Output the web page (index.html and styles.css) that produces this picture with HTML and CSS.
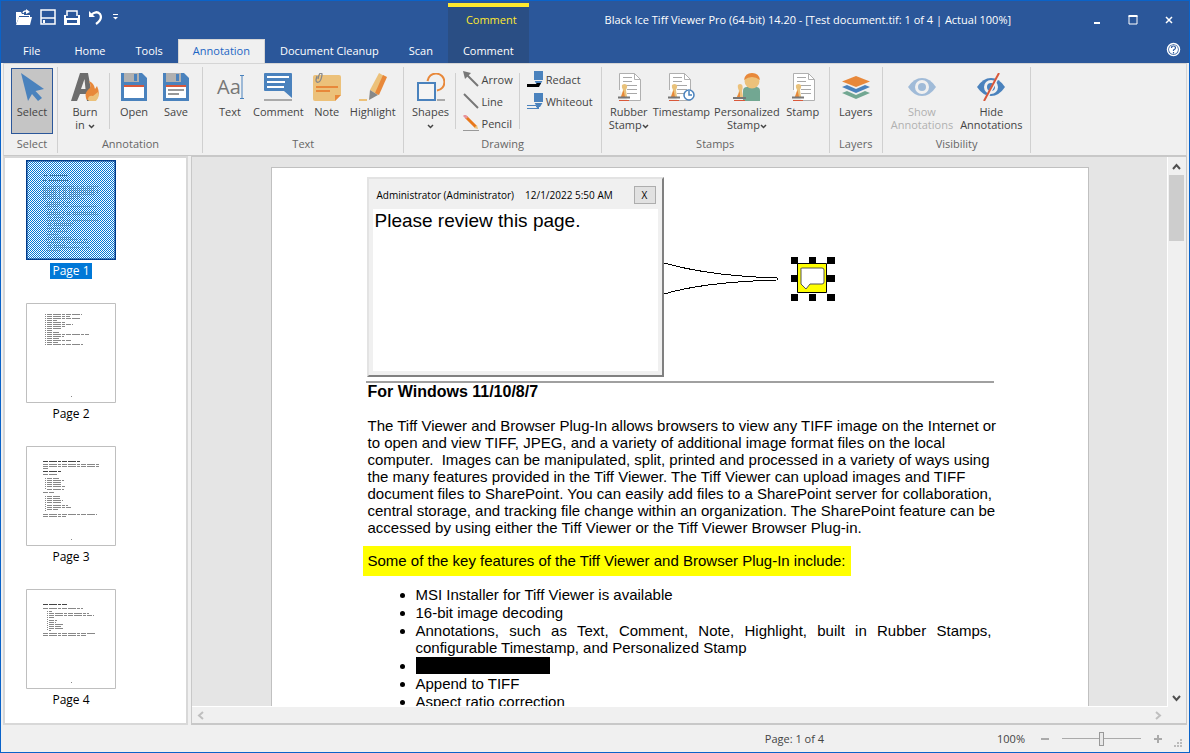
FILE: index.html
```html
<!DOCTYPE html>
<html lang="en">
<head>
  <meta charset="UTF-8">
  <meta name="viewport" content="width=device-width, initial-scale=1.0">
  <title>Black Ice Tiff Viewer Pro</title>
  <link rel="stylesheet" href="styles.css">
</head>
<body>
  <!-- Shared icon parts -->
  <svg class="defs" aria-hidden="true">
    <symbol id="stamp-doc" viewBox="0 0 28 28">
      <path d="M4.500 17V.5H19.500L25.500 6.500V27.500H13" fill="#fff" stroke="#b0b0b0"/>
      <path d="M19.500 .5V6.500H25.500" fill="none" stroke="#b0b0b0"/>
      <path d="M8 4.500H17M8 8.500H17M8 12.500H22M12 16.500H22M12 20.500H22" stroke="#a8a8a8"/>
      <path d="M6 24L8 17Q5 11 9.500 11Q14 11 11 17L12 24Z" fill="#e9c27b"/>
      <path d="M6 24L8.500 17L10 24Z" fill="#e8883a"/>
      <path d="M3 24.500H15" stroke="#777" stroke-width="2"/>
      <path d="M4 27.500H14" stroke="#d9583a"/>
    </symbol>
    <symbol id="chevron" viewBox="0 0 7 5">
      <path d="M1 1L3.500 3.500L6 1" fill="none" stroke="#444" stroke-width="1.500"/>
    </symbol>
    <pattern id="checker" width="2" height="2" patternUnits="userSpaceOnUse">
      <path d="M0 0H1V1H0ZM1 1H2V2H1Z" fill="#0078d7"/>
    </pattern>
  </svg>

  <header class="titlebar">
    <div class="titlebar-left">
      <div class="quick-access">
        <button aria-label="Open file">
          <svg width="16" height="16" viewBox="0 0 16 16"><path d="M0 15V3H5L6 5H8V6H14V8H3L1 13" fill="#fff"/><path d="M0 16L3 8H16L14 16Z" fill="#fff"/><path d="M3 7.500H13" stroke="#2b579a"/><path d="M7 4Q8 1 12 2.500" fill="none" stroke="#fff" stroke-width="1.500"/><path d="M10 0L14 3L10 5Z" fill="#fff"/></svg>
        </button>
        <button aria-label="Save">
          <svg width="16" height="16" viewBox="0 0 16 16"><path d="M1 1H15V15H1ZM1 9H15" fill="none" stroke="#fff" stroke-width="1.500"/><path d="M4 11V14" stroke="#fff" stroke-width="2"/></svg>
        </button>
        <button aria-label="Print">
          <svg width="16" height="16" viewBox="0 0 16 16"><path d="M3 7V2H13V7" fill="none" stroke="#fff" stroke-width="1.500"/><path d="M0 6H2V9H14V6H16V16H0Z" fill="#fff"/><path d="M3 11H13V14H3Z" fill="#2b579a"/></svg>
        </button>
        <button aria-label="Undo">
          <svg width="16" height="16" viewBox="0 0 16 16"><path d="M3 6Q8 1 12 5Q15 10 8 15" fill="none" stroke="#fff" stroke-width="2.200"/><path d="M1 2V8H7Z" fill="#fff"/></svg>
        </button>
        <button class="narrow" aria-label="Customize toolbar">
          <svg width="5" height="6" viewBox="0 0 5 6"><path d="M0 .5H5" stroke="#fff"/><path d="M0 3H5L2.500 5.500Z" fill="#fff"/></svg>
        </button>
      </div>
      <nav class="tabs">
        <button class="tab file">File</button>
        <button class="tab">Home</button>
        <button class="tab">Tools</button>
        <button class="tab active">Annotation</button>
        <button class="tab">Document Cleanup</button>
        <button class="tab">Scan</button>
      </nav>
    </div>
    <div class="context-tab">
      <div class="context-title">Comment</div>
      <button class="tab">Comment</button>
    </div>
    <div class="titlebar-right">
      <div class="caption-row">
        <h1 class="caption">Black Ice Tiff Viewer Pro (64-bit) 14.20 - [Test document.tif: 1 of 4 | Actual 100%]</h1>
        <div class="window-buttons">
          <button aria-label="Minimize"><svg width="10" height="10" viewBox="0 0 10 10"><path d="M2 8H8" stroke="#fff" stroke-width="2"/></svg></button>
          <button aria-label="Maximize"><svg width="10" height="10" viewBox="0 0 10 10"><path d="M1 1H9V9H1Z" fill="none" stroke="#fff"/><path d="M.5 1H9.500" stroke="#fff" stroke-width="2"/></svg></button>
          <button aria-label="Close"><svg width="10" height="10" viewBox="0 0 10 10"><path d="M2 2L8 8M8 2L2 8" stroke="#fff" stroke-width="1.500"/></svg></button>
        </div>
      </div>
      <div class="help-row">
        <button aria-label="Help"><svg width="15" height="15" viewBox="0 0 15 15"><circle cx="7.500" cy="7.500" r="6" fill="#2b579a" stroke="#fff" stroke-width="1.500"/><circle cx="7.500" cy="7.500" r="4.500" fill="#fff"/><path d="M5.500 6Q5.500 4 7.500 4Q9.500 4 9.500 6Q9.500 7 7.500 8V9" fill="none" stroke="#2b579a" stroke-width="1.200"/><path d="M7.500 10V11.500" stroke="#2b579a" stroke-width="1.200"/></svg></button>
      </div>
    </div>
  </header>

  <section class="ribbon">
    <div class="group">
      <div class="items">
        <button class="big selected">
          <svg width="28" height="28" viewBox="0 0 28 28"><path d="M3 0L26 16L17.500 18L24 25L20 28L14 21L10 28Z" fill="#4a82bd"/></svg>
          <span>Select</span>
        </button>
      </div>
      <div class="group-name">Select</div>
    </div>

    <div class="group roomy">
      <div class="items">
        <button class="big">
          <svg width="28" height="28" viewBox="0 0 28 28"><path d="M0 28L9 0H17L22 28H16L15 21H9L6 28ZM10 16H14.500L13.500 6Z" fill="#6d6d6d"/><path d="M16 27Q12 20 19 15Q20 12 18 8Q23 10 24 16L26 13Q30 22 25 27Z" fill="#e8883a"/><path d="M17 27Q17 22 22 23L27 19Q29 24 25 28H18Z" fill="#ecc17a"/></svg>
          <span>Burn<br>in <svg width="7" height="5"><use href="#chevron"/></svg></span>
        </button>
        <div class="divider"></div>
        <button class="big">
          <svg width="28" height="28" viewBox="0 0 28 28"><path d="M1 0H22L27 5V28H1Z" fill="#4a82bd"/><path d="M4 0H19V9H4Z" fill="#b0b0b0"/><path d="M14 1H17V8H14Z" fill="#4a82bd"/><path d="M4 13H24V25H4Z" fill="#fff"/><path d="M4 13H24" stroke="#d9583a" stroke-width="2"/></svg>
          <span>Open</span>
        </button>
        <button class="big">
          <svg width="28" height="28" viewBox="0 0 28 28"><path d="M1 0H22L27 5V28H1Z" fill="#4a82bd"/><path d="M4 0H19V9H4Z" fill="#b0b0b0"/><path d="M14 1H17V8H14Z" fill="#4a82bd"/><path d="M4 13H24V25H4Z" fill="#fff"/><path d="M4 13H24" stroke="#d9583a" stroke-width="2"/><path d="M6 17H22M6 21H17" stroke="#777" stroke-width="1.500"/></svg>
          <span>Save</span>
        </button>
      </div>
      <div class="group-name">Annotation</div>
    </div>

    <div class="group roomy">
      <div class="items">
        <button class="big">
          <svg width="28" height="28" viewBox="0 0 28 28"><text x="1" y="21" font-family="Open Sans" font-size="20" fill="#777">Aa</text><path d="M24 2.500H28M24 25.500H28M26 2.500V25.500" stroke="#4a82bd"/></svg>
          <span>Text</span>
        </button>
        <button class="big">
          <svg width="28" height="28" viewBox="0 0 28 28"><path d="M1 0H27Q28 0 28 1V25L20 18H1Q0 18 0 17V1Q0 0 1 0Z" fill="#4a82bd"/><path d="M3 4H25M3 9H21M3 14H20" stroke="#fff" stroke-width="2"/><path d="M0 27H28" stroke="#aaa" stroke-width="2"/></svg>
          <span>Comment</span>
        </button>
        <button class="big">
          <svg width="28" height="28" viewBox="0 0 28 28"><path d="M2 2H26Q28 2 28 4V22L22 28H2Q0 28 0 26V4Q0 2 2 2Z" fill="#ecc17a"/><path d="M22 28V22H28Z" fill="#e8883a"/><path d="M3 14H25M3 18H17" stroke="#e8883a" stroke-width="2"/><path d="M4 3L3 7Q3 10 6 9Q8 8 9 2Q9-1 7 .5Q6 1 5 6" fill="none" stroke="#888" stroke-width="1.300"/></svg>
          <span>Note</span>
        </button>
        <button class="big">
          <svg width="28" height="28" viewBox="0 0 28 28"><path d="M11 17L20 0L27 4L19 22Z" fill="#ecc17a"/><path d="M16 20L24 2L28 4L20 22Z" fill="#e8883a"/><path d="M11 17L19 22L10 27Z" fill="#888"/><path d="M0 27H8" stroke="#ecc17a" stroke-width="2"/></svg>
          <span>Highlight</span>
        </button>
      </div>
      <div class="group-name">Text</div>
    </div>

    <div class="group roomy">
      <div class="items">
        <button class="big">
          <svg width="28" height="28" viewBox="0 0 28 28"><path d="M10.500 8A8.500 8.500 0 1 1 20 17.500" fill="none" stroke="#e8883a" stroke-width="2"/><path d="M1 10H18V27H1Z" fill="#f4f4f4" stroke="#4a82bd" stroke-width="2"/><path d="M20 27H28" stroke="#aaa" stroke-width="2"/></svg>
          <span>Shapes<br><svg width="7" height="5"><use href="#chevron"/></svg></span>
        </button>
        <div class="divider"></div>
        <div class="stack">
          <button class="small">
            <svg width="16" height="16" viewBox="0 0 16 16"><path d="M3 3L15 15" stroke="#777" stroke-width="2"/><path d="M0 0L8 2L2 8Z" fill="#777"/></svg>
            <span>Arrow</span>
          </button>
          <button class="small">
            <svg width="16" height="16" viewBox="0 0 16 16"><path d="M1 1L15 15" stroke="#777" stroke-width="2"/></svg>
            <span>Line</span>
          </button>
          <button class="small">
            <svg width="16" height="16" viewBox="0 0 16 16"><path d="M3 2L13 12" stroke="#e8781a" stroke-width="3"/><path d="M1 0L4 3" stroke="#e8939b" stroke-width="3"/><path d="M15 14L11 13L14 10Z" fill="#ecc17a"/><path d="M0 15.500H16" stroke="#999"/></svg>
            <span>Pencil</span>
          </button>
        </div>
        <div class="divider"></div>
        <div class="stack">
          <button class="small">
            <svg width="16" height="16" viewBox="0 0 16 16"><path d="M7 0H16V9L13 14H10L7 9Z" fill="#4a82bd"/><path d="M7 9.500H16" stroke="#f0f0f0"/><path d="M0 13H9L10 12H14L12 16H0Z" fill="#000"/></svg>
            <span>Redact</span>
          </button>
          <button class="small">
            <svg width="16" height="16" viewBox="0 0 16 16"><path d="M7 0H16V9L13 14H10L7 9Z" fill="#4a82bd"/><path d="M7 9.500H16" stroke="#f0f0f0"/><path d="M0 12.500H9L10 14.500H12M0 15.500H12" fill="none" stroke="#4a82bd"/></svg>
            <span>Whiteout</span>
          </button>
        </div>
      </div>
      <div class="group-name">Drawing</div>
    </div>

    <div class="group">
      <div class="items">
        <button class="big">
          <svg width="28" height="28"><use href="#stamp-doc"/></svg>
          <span>Rubber<br>Stamp<svg width="7" height="5"><use href="#chevron"/></svg></span>
        </button>
        <button class="big">
          <svg width="28" height="28" viewBox="0 0 28 28"><use href="#stamp-doc" x="-2" width="28" height="28"/><circle cx="22" cy="22" r="5" fill="#fff" stroke="#4a82bd" stroke-width="1.500"/><path d="M22 18V22H25" fill="none" stroke="#4a82bd" stroke-width="1.500"/></svg>
          <span>Timestamp</span>
        </button>
        <button class="big">
          <svg width="28" height="28" viewBox="0 0 28 28"><path d="M10 28V18Q10 14 14 14H23Q27 14 27 18V28Z" fill="#72a792"/><circle cx="19" cy="8" r="7.500" fill="#ecc17a"/><path d="M11 7Q12 0 19 0Q26 0 27 7Q23 4 19 4Q15 4 11 7Z" fill="#e8883a"/><path d="M4 24L6 18Q3 11 7 11Q11 11 9 18L10 24Z" fill="#ecc17a"/><path d="M4 24L7 18V24Z" fill="#e8883a"/><path d="M0 25H13" stroke="#777" stroke-width="2"/><path d="M1 27.500H12" stroke="#d9583a"/></svg>
          <span>Personalized<br>Stamp<svg width="7" height="5"><use href="#chevron"/></svg></span>
        </button>
        <button class="big">
          <svg width="28" height="28"><use href="#stamp-doc"/></svg>
          <span>Stamp</span>
        </button>
      </div>
      <div class="group-name">Stamps</div>
    </div>

    <div class="group">
      <div class="items">
        <button class="big">
          <svg width="28" height="28" viewBox="0 0 28 28"><path d="M0 20L5 18L14 22L23 18L28 20L14 26Z" fill="#72a792"/><path d="M0 14L5 12L14 16L23 12L28 14L14 20Z" fill="#4a82bd"/><path d="M14 3L28 8.500L14 14L0 8.500Z" fill="#f0f0f0" stroke="#f0f0f0" stroke-width="2"/><path d="M14 3L28 8.500L14 14L0 8.500Z" fill="#e8883a"/></svg>
          <span>Layers</span>
        </button>
      </div>
      <div class="group-name">Layers</div>
    </div>

    <div class="group roomy">
      <div class="items spaced">
        <button class="big" disabled>
          <svg width="28" height="28" viewBox="0 0 28 28"><path d="M0 14Q6 5 14 5Q22 5 28 14Q22 23 14 23Q6 23 0 14Z" fill="#a0bbd8"/><circle cx="14" cy="14" r="5.500" fill="#a0bbd8" stroke="#f0f0f0" stroke-width="3"/></svg>
          <span>Show<br>Annotations</span>
        </button>
        <button class="big">
          <svg width="28" height="28" viewBox="0 0 28 28"><path d="M0 14Q6 5 14 5Q22 5 28 14Q22 23 14 23Q6 23 0 14Z" fill="#4a82bd"/><circle cx="14" cy="14" r="5.500" fill="#4a82bd" stroke="#f0f0f0" stroke-width="3"/><path d="M23 0L8 28" stroke="#f0f0f0" stroke-width="3"/><path d="M22 0L7 28" stroke="#d9583a" stroke-width="2"/></svg>
          <span>Hide<br>Annotations</span>
        </button>
      </div>
      <div class="group-name">Visibility</div>
    </div>
  </section>

  <main class="workspace">
    <aside class="thumbs">
      <figure class="thumb current">
        <svg width="90" height="100" viewBox="0 0 90 100">
          <path d="M0 0H90V100H0Z" fill="#fff"/>
          <g class="micro">
            <path class="strong" d="M17 15.500H41M16 20.500H42"/>
            <path d="M16 26.500H73M17 28.500H71M17 30.500H73M17 32.500H72M17 34.500H70M17 36.500H54M16 38.500H60M21 42.500H45M21 44.500H38M19 46.500H73M21 49.500H32M21 52.500H70M21 54.500H73M21 57.500H37M21 60.500H72M21 63.500H47M21 65.500H46M21 68.500H42M21 71.500H41M21 74.500H33M21 77.500H46M19 79.500H63M21 82.500H63M21 85.500H39M21 87.500H66M21 90.500H36"/>
          </g>
          <path d="M0 0H90V100H0Z" fill="url(#checker)" shape-rendering="crispEdges"/>
          <path d="M.5 .5H89.500V99.500H.5Z" fill="none" stroke="#003c8c" stroke-width="2"/>
        </svg>
        <figcaption>Page 1</figcaption>
      </figure>
      <figure class="thumb">
        <svg width="90" height="100" viewBox="0 0 90 100">
          <path d="M.5 .5H89.500V99.500H.5Z" fill="#fff" stroke="#bfbfbf"/>
          <g class="micro">
            <path d="M21 11.500H56M21 13.500H44M21 15.500H54M21 17.500H31M21 19.500H40M21 21.500H47M21 23.500H39M21 25.500H36M21 27.500H27M21 29.500H33M21 31.500H63M21 33.500H38M21 35.500H33M21 37.500H46M21 39.500H32M21 41.500H57"/>
            <path class="dots" d="M19.500 11V42"/>
            <path d="M45 93.500H46"/>
          </g>
        </svg>
        <figcaption>Page 2</figcaption>
      </figure>
      <figure class="thumb">
        <svg width="90" height="100" viewBox="0 0 90 100">
          <path d="M.5 .5H89.500V99.500H.5Z" fill="#fff" stroke="#bfbfbf"/>
          <g class="micro">
            <path class="strong" d="M17 15.500H55M17 25.500H36"/>
            <path d="M17 18.500H73M17 20.500H74M17 22.500H22M17 28.500H31M21 32.500H33M21 34.500H38M21 36.500H36M21 38.500H36M21 40.500H39M21 43.500H38M17 46.500H28M21 50.500H34M21 52.500H34M21 54.500H37M21 56.500H35M21 59.500H42M21 61.500H46M21 63.500H32M17 68.500H71M17 70.500H40"/>
            <path class="dots" d="M19.500 32V44M19.500 50V65"/>
            <path d="M45 93.500H46"/>
          </g>
        </svg>
        <figcaption>Page 3</figcaption>
      </figure>
      <figure class="thumb">
        <svg width="90" height="100" viewBox="0 0 90 100">
          <path d="M.5 .5H89.500V99.500H.5Z" fill="#fff" stroke="#bfbfbf"/>
          <g class="micro">
            <path class="strong" d="M17 15.500H41"/>
            <path d="M17 19.500H57M23 22.500H26M23 24.500H63M23 26.500H68M23 28.500H28M23 31.500H31M23 33.500H30M23 35.500H37M23 37.500H35M23 39.500H37M23 41.500H25M17 44.500H70M17 46.500H60"/>
            <path class="dots" d="M21.500 22V42"/>
            <path d="M45 93.500H46"/>
          </g>
        </svg>
        <figcaption>Page 4</figcaption>
      </figure>
    </aside>

    <section class="viewer">
      <div class="viewer-main">
        <div class="canvas">
          <article class="page">
            <hr>
            <h2>For Windows 11/10/8/7</h2>
            <p class="intro">The Tiff Viewer and Browser Plug-In allows browsers to view any TIFF image on the Internet or<br>
              to open and view TIFF, JPEG, and a variety of additional image format files on the local<br>
              computer.&nbsp; Images can be manipulated, split, printed and processed in a variety of ways using<br>
              the many features provided in the Tiff Viewer. The Tiff Viewer can upload images and TIFF<br>
              document files to SharePoint. You can easily add files to a SharePoint server for collaboration,<br>
              central storage, and tracking file change within an organization. The SharePoint feature can be<br>
              accessed by using either the Tiff Viewer or the Tiff Viewer Browser Plug-in.</p>
            <p class="marked"><mark>Some of the key features of the Tiff Viewer and Browser Plug-In include:</mark></p>
            <ul>
              <li>MSI Installer for Tiff Viewer is available</li>
              <li>16-bit image decoding</li>
              <li class="justified">Annotations, such as Text, Comment, Note, Highlight, built in Rubber Stamps, configurable Timestamp, and Personalized Stamp</li>
              <li><span class="redacted"></span></li>
              <li>Append to TIFF</li>
              <li>Aspect ratio correction</li>
            </ul>

            <!-- Comment annotation placed over the page -->
            <div class="note">
              <div class="note-head">
                <label for="note-text">Administrator (Administrator)</label>
                <time>12/1/2022 5:50 AM</time>
                <button aria-label="Close comment">X</button>
              </div>
              <textarea id="note-text">Please review this page.</textarea>
            </div>
            <svg class="callout" width="114" height="34" viewBox="0 0 114 34">
              <path d="M0 1Q46 14 113 16V18Q40 20 0 32" fill="none" stroke="#000" shape-rendering="crispEdges"/>
            </svg>
            <svg class="marker" width="44" height="44" viewBox="0 0 44 44">
              <path d="M6.500 6.500H35.500V35.500H6.500Z" fill="#ff0" stroke="#000"/>
              <path d="M11 11H31Q33 11 33 13V25Q33 27 31 27H19L15 32L10 27V13Q9 11 11 11Z" fill="#fff" stroke="#555"/>
              <path d="M0 0H7V7H0ZM18 0H25V7H18ZM36 0H44V7H36ZM0 18H6V25H0ZM36 18H44V25H36ZM0 37H7V44H0ZM18 37H25V44H18ZM36 37H44V44H36Z"/>
            </svg>
          </article>
        </div>
        <div class="vscroll">
          <button aria-label="Scroll up"><svg width="9" height="7" viewBox="0 0 9 7"><path d="M1 6L4.500 2L8 6" fill="none" stroke="#505050" stroke-width="2"/></svg></button>
          <div class="vscroll-thumb"></div>
          <button class="end" aria-label="Scroll down"><svg width="9" height="7" viewBox="0 0 9 7"><path d="M1 1L4.500 5L8 1" fill="none" stroke="#505050" stroke-width="2"/></svg></button>
        </div>
      </div>
      <div class="hscroll">
        <button aria-label="Scroll left"><svg width="7" height="9" viewBox="0 0 7 9"><path d="M6 1L2 4.500L6 8" fill="none" stroke="#bfbfbf" stroke-width="2"/></svg></button>
        <button aria-label="Scroll right"><svg width="7" height="9" viewBox="0 0 7 9"><path d="M1 1L5 4.500L1 8" fill="none" stroke="#bfbfbf" stroke-width="2"/></svg></button>
      </div>
    </section>
  </main>

  <footer class="statusbar">
    <span class="page-info">Page: 1 of 4</span>
    <label for="zoom">100%</label>
    <button aria-label="Zoom out"><svg width="8" height="8" viewBox="0 0 8 8"><path d="M0 4H8" stroke="#aaa" stroke-width="2"/></svg></button>
    <input type="range" id="zoom" min="0" max="100" value="50">
    <button aria-label="Zoom in"><svg width="8" height="8" viewBox="0 0 8 8"><path d="M0 4H8M4 0V8" stroke="#aaa" stroke-width="2"/></svg></button>
    <svg class="grip" width="8" height="8" viewBox="0 0 8 8"><path d="M6 0H8V2H6ZM3 3H5V5H3ZM6 3H8V5H6ZM0 6H2V8H0ZM3 6H5V8H3ZM6 6H8V8H6Z" fill="#bbb"/></svg>
  </footer>
</body>
</html>
```
FILE: styles.css
```css
* {
  box-sizing: border-box;
}

body {
  margin: 0;
  height: 100vh;
  display: flex;
  flex-direction: column;
  overflow: hidden;
  border: 1px solid #0a63c9;
  background: #f0f0f0;
  color: #444;
  font-family: "Open Sans", sans-serif;
  font-size: 11px;
}

button {
  margin: 0;
  padding: 0;
  border: none;
  background: none;
  color: inherit;
  font: inherit;
}

svg {
  display: block;
}

.defs {
  position: absolute;
  width: 0;
  height: 0;
}

/* Title bar and tabs */
.titlebar {
  display: flex;
  height: 62px;
  flex: none;
  background: #2b579a;
  color: #fff;
}

.titlebar-left {
  display: flex;
  flex-direction: column;
  justify-content: space-between;
}

.quick-access {
  display: flex;
  gap: 8px;
  padding: 8px 0 0 15px;
}

.quick-access .narrow {
  padding-left: 1px;
}

.tabs {
  display: flex;
  padding-left: 7px;
}

.tab {
  height: 24px;
  padding: 0 14px 2px;
  border: 1px solid transparent;
  border-bottom: none;
  white-space: nowrap;
}

.tab.file {
  margin-right: 4px;
}

.tab.active {
  background: #f0f0f0;
  border-color: #d5d5d5;
  color: #1c66c4;
}

.context-tab {
  display: flex;
  flex-direction: column;
  justify-content: space-between;
  margin-top: 2px;
  border-top: 4px solid #ffe92e;
  background: #2a4e84;
}

.context-title {
  padding: 5px 0 0 18px;
  color: #ffe92e;
}

.titlebar-right {
  flex: 1;
  display: flex;
  flex-direction: column;
  justify-content: space-between;
}

.caption-row {
  display: flex;
  align-items: center;
  padding: 10px 2px 0 0;
}

.caption {
  flex: 1;
  margin: 0;
  padding-left: 8px;
  font-size: 11px;
  font-weight: normal;
  line-height: 18px;
  text-align: center;
  white-space: nowrap;
}

.window-buttons {
  display: flex;
}

.window-buttons button {
  width: 36px;
  height: 18px;
  display: flex;
  align-items: center;
  justify-content: center;
}

.help-row {
  display: flex;
  justify-content: flex-end;
  padding: 0 8px 6px;
}

/* Ribbon */
.ribbon {
  display: flex;
  flex: none;
  margin: 0 2px;
  padding: 3px 0 2px;
  border: 1px solid #d5d5d5;
  border-bottom: 1px solid #c8c8c8;
}

.group {
  display: flex;
  flex-direction: column;
  padding: 0 5px;
  border-right: 1px solid #d0d0d0;
}

.group.roomy {
  padding-left: 6px;
}

.group:first-child {
  padding: 0 4px 0 7px;
}

.items {
  display: flex;
  height: 68px;
  padding-top: 1px;
}

.items.spaced {
  gap: 3px;
}

.big {
  display: flex;
  flex-direction: column;
  align-items: center;
  gap: 4px;
  min-width: 42px;
  height: 66px;
  padding: 4px 1px 0;
  border: 1px solid transparent;
  line-height: 13px;
  text-align: center;
  white-space: nowrap;
}

.big span svg {
  display: inline-block;
  vertical-align: middle;
}

.big.selected {
  background: #c5c5c5;
  border-color: #2b579a;
}

.big:disabled {
  color: #b0b0b0;
}

.divider {
  width: 1px;
  margin: 5px 3px 6px;
  background: #d0d0d0;
}

.stack {
  padding: 0 3px 0 4px;
}

.small {
  display: flex;
  align-items: center;
  gap: 3px;
  height: 22px;
}

.group-name {
  color: #666;
  line-height: 18px;
  text-align: center;
}

/* Page list and document view */
.workspace {
  flex: 1;
  display: flex;
  gap: 3px;
  min-height: 0;
  margin: 0 2px;
}

.thumbs {
  width: 185px;
  flex: none;
  overflow: hidden;
  padding: 2px 0 0 21px;
  border: 2px solid #d8d8d8;
  background: #fff;
  color: #000;
}

.thumb {
  width: 90px;
  height: 143px;
  margin: 0;
  display: flex;
  flex-direction: column;
  align-items: center;
  gap: 3px;
}

.thumb figcaption {
  padding: 0 2px;
  font-size: 12px;
  line-height: 16px;
}

.thumb.current figcaption {
  background: #0078d7;
  color: #fff;
}

.micro path {
  fill: none;
  stroke: #888;
  stroke-dasharray: 5 1 8 1 3 1;
}

.micro .strong {
  stroke: #444;
}

.current .micro path {
  stroke: #bbb;
}

.current .micro .strong {
  stroke: #777;
}

.micro .dots {
  stroke-dasharray: 1 1;
}

.viewer {
  flex: 1;
  min-width: 0;
  display: flex;
  flex-direction: column;
  border: 1px solid #c8c8c8;
  border-bottom-width: 2px;
  background: #f0f0f0;
}

.viewer-main {
  flex: 1;
  min-height: 0;
  display: flex;
}

.canvas {
  flex: 1;
  min-width: 0;
  overflow: hidden;
  padding-top: 10px;
  border-bottom: 1px solid #fff;
  background: #e5e5e5;
}

.page {
  position: relative;
  max-width: 818px;
  margin: 0 auto;
  padding: 213px 96px 20px;
  border: 1px solid #c0c0c0;
  background: #fff;
  color: #000;
  font-family: "Liberation Sans", Arial, sans-serif;
  font-size: 15px;
  line-height: 17px;
}

.page hr {
  height: 2px;
  margin: 0 -2px;
  border: none;
  background: #a0a0a0;
}

.page h2 {
  margin: 0 0 17px;
  font-size: 16px;
}

.page p {
  margin: 0 0 10px;
}

.page .intro {
  white-space: nowrap;
}

.page .marked {
  margin: 0 0 10px -5px;
}

.page mark {
  display: inline-block;
  padding: 6px 5px 7px;
  background: #ff0;
}

.page ul {
  margin: 0;
  padding-left: 48px;
}

.page li {
  margin-bottom: 1px;
}

.page .justified {
  text-align: justify;
}

.redacted {
  display: block;
  width: 134px;
  height: 17px;
  background: #000;
}

/* Annotation overlay */
.note {
  position: absolute;
  top: 9px;
  left: 95px;
  width: 297px;
  height: 200px;
  display: flex;
  flex-direction: column;
  padding: 4px;
  border: 2px solid #e3e3e3;
  border-right-color: #808080;
  border-bottom-color: #808080;
  background: #f0f0f0;
}

.note-head {
  display: flex;
  align-items: center;
  gap: 11px;
  height: 26px;
  padding: 0 2px 2px 4px;
  font-family: "Open Sans", sans-serif;
  font-size: 10px;
  white-space: nowrap;
}

.note-head button {
  flex: none;
  width: 22px;
  height: 18px;
  margin-left: auto;
  border: 1px solid #adadad;
  background: #e1e1e1;
  line-height: 16px;
}

.note textarea {
  flex: 1;
  padding: 0 2px;
  border: none;
  outline: none;
  resize: none;
  background: #fff;
  font-family: "Liberation Sans", Arial, sans-serif;
  font-size: 19px;
  line-height: 24px;
}

.callout {
  position: absolute;
  top: 94px;
  left: 392px;
}

.marker {
  position: absolute;
  top: 89px;
  left: 519px;
}

/* Scrollbars */
.vscroll {
  width: 19px;
  display: flex;
  flex-direction: column;
  padding: 1px 2px 0 1px;
  border-left: 1px solid #fff;
}

.vscroll button {
  height: 17px;
  display: flex;
  align-items: center;
  justify-content: center;
}

.vscroll .end {
  margin-top: auto;
}

.vscroll-thumb {
  height: 66px;
  background: #cdcdcd;
}

.hscroll {
  display: flex;
  justify-content: space-between;
  height: 16px;
  padding: 0 24px 0 5px;
}

/* Status bar */
.statusbar {
  flex: none;
  display: flex;
  align-items: center;
  height: 27px;
  padding: 0 7px 0 14px;
}

.page-info {
  margin-left: auto;
}

.statusbar label {
  margin: 0 16px 0 173px;
}

.statusbar input {
  appearance: none;
  width: 79px;
  height: 14px;
  margin: 0 13px;
  background: linear-gradient(#aaa, #aaa) center / 100% 1px no-repeat;
}

.statusbar input::-webkit-slider-thumb {
  appearance: none;
  width: 5px;
  height: 14px;
  border: 1px solid #999;
  background: #e8e8e8;
}

.grip {
  align-self: flex-end;
  margin: 0 0 5px 12px;
}
```
